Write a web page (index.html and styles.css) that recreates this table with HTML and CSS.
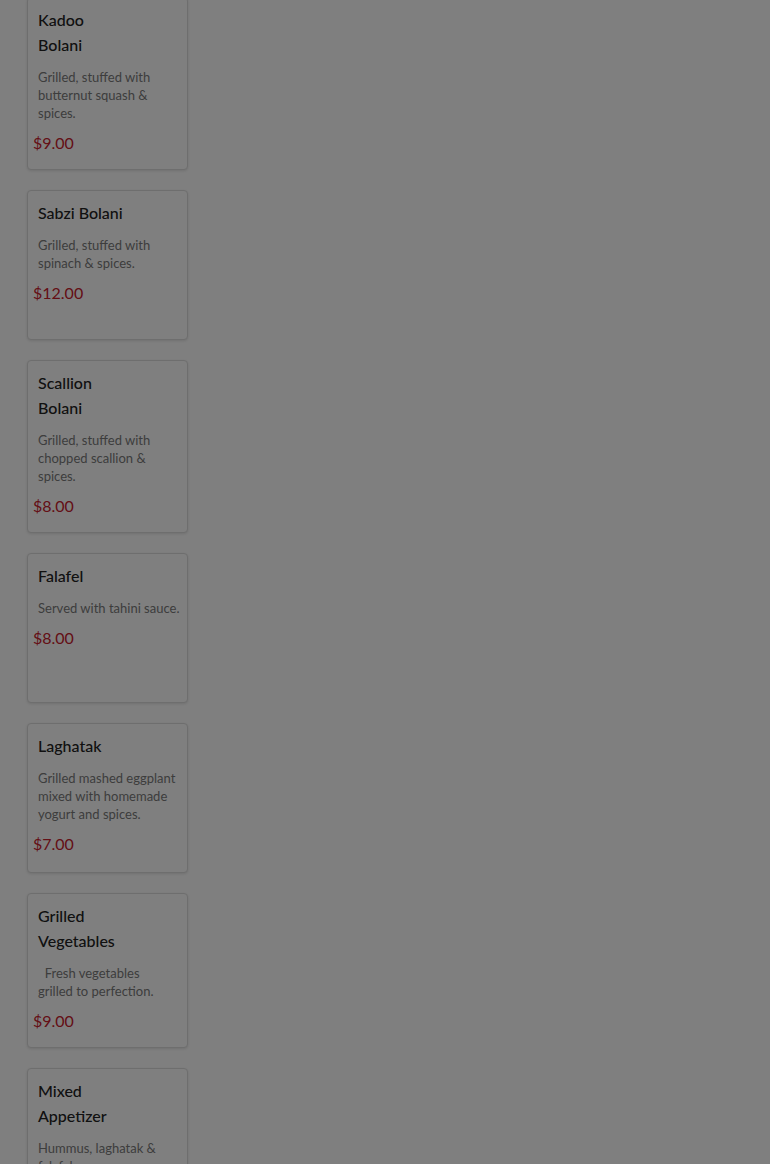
FILE: index.html
```html
<!DOCTYPE html>
<html lang="en">
<head>
    <meta charset="UTF-8">
    <meta name="viewport" content="width=device-width, initial-scale=1.0">
    <title>Menu</title>
    <link rel="stylesheet" href="styles.css">
</head>
<body>
    <div class="menu-list">
        <div class="menu-card">
            <h4 class="item-name">Kadoo Bolani</h4>
            <p class="item-desc">Grilled, stuffed with butternut squash &amp; spices.</p>
            <p class="item-price">$9.00</p>
        </div>
        <div class="menu-card">
            <h4 class="item-name">Sabzi Bolani</h4>
            <p class="item-desc">Grilled, stuffed with spinach &amp; spices.</p>
            <p class="item-price">$12.00</p>
        </div>
        <div class="menu-card">
            <h4 class="item-name">Scallion Bolani</h4>
            <p class="item-desc">Grilled, stuffed with chopped scallion &amp; spices.</p>
            <p class="item-price">$8.00</p>
        </div>
        <div class="menu-card">
            <h4 class="item-name">Falafel</h4>
            <p class="item-desc">Served with tahini sauce.</p>
            <p class="item-price">$8.00</p>
        </div>
        <div class="menu-card">
            <h4 class="item-name">Laghatak</h4>
            <p class="item-desc">Grilled mashed eggplant mixed with homemade yogurt and spices.</p>
            <p class="item-price">$7.00</p>
        </div>
        <div class="menu-card">
            <h4 class="item-name">Grilled Vegetables</h4>
            <p class="item-desc">&nbsp;&nbsp;Fresh vegetables<br>grilled to perfection.</p>
            <p class="item-price">$9.00</p>
        </div>
        <div class="menu-card">
            <h4 class="item-name">Mixed Appetizer</h4>
            <p class="item-desc">Hummus, laghatak &amp; falafel.</p>
            <p class="item-price">$10.00</p>
        </div>
    </div>

    <!-- modal backdrop -->
    <div class="back-black"></div>
</body>
</html>
```

FILE: styles.css
```css
body{
    margin: 0;
    background: white;
    font-family: "Lato", "Liberation Sans", sans-serif;
}

.menu-list{
    display: flex;
    flex-direction: column;
    gap: 20px;
    width: 161px;
    margin-left: 27px;
    margin-top: -3px;
}

.menu-card{
    box-sizing: border-box;
    min-height: 150px;
    padding: 9px 10px 16px 10px;
    border: 1px solid #dcdcdc;
    border-radius: 4px;
    background: white;
    box-shadow: 0 1px 3px rgba(0, 0, 0, 0.12);
}

.item-name{
    margin: 0;
    max-width: 90px;
    font-size: 16px;
    font-weight: 500;
    line-height: 25px;
    color: #222;
}

.item-desc{
    margin: 11px -5px 0 0;
    font-size: 13px;
    line-height: 18px;
    color: #7a7a7a;
}

.item-price{
    margin: 11px 0 0 -5px;
    font-size: 16px;
    line-height: 20px;
    color: #c8202c;
}

.back-black{
    position: fixed;
    top: 0;
    left: 0;
    width: 100%;
    height: 100%;
    background: rgba(0, 0, 0, 0.5);
    z-index: 10;
}
```
